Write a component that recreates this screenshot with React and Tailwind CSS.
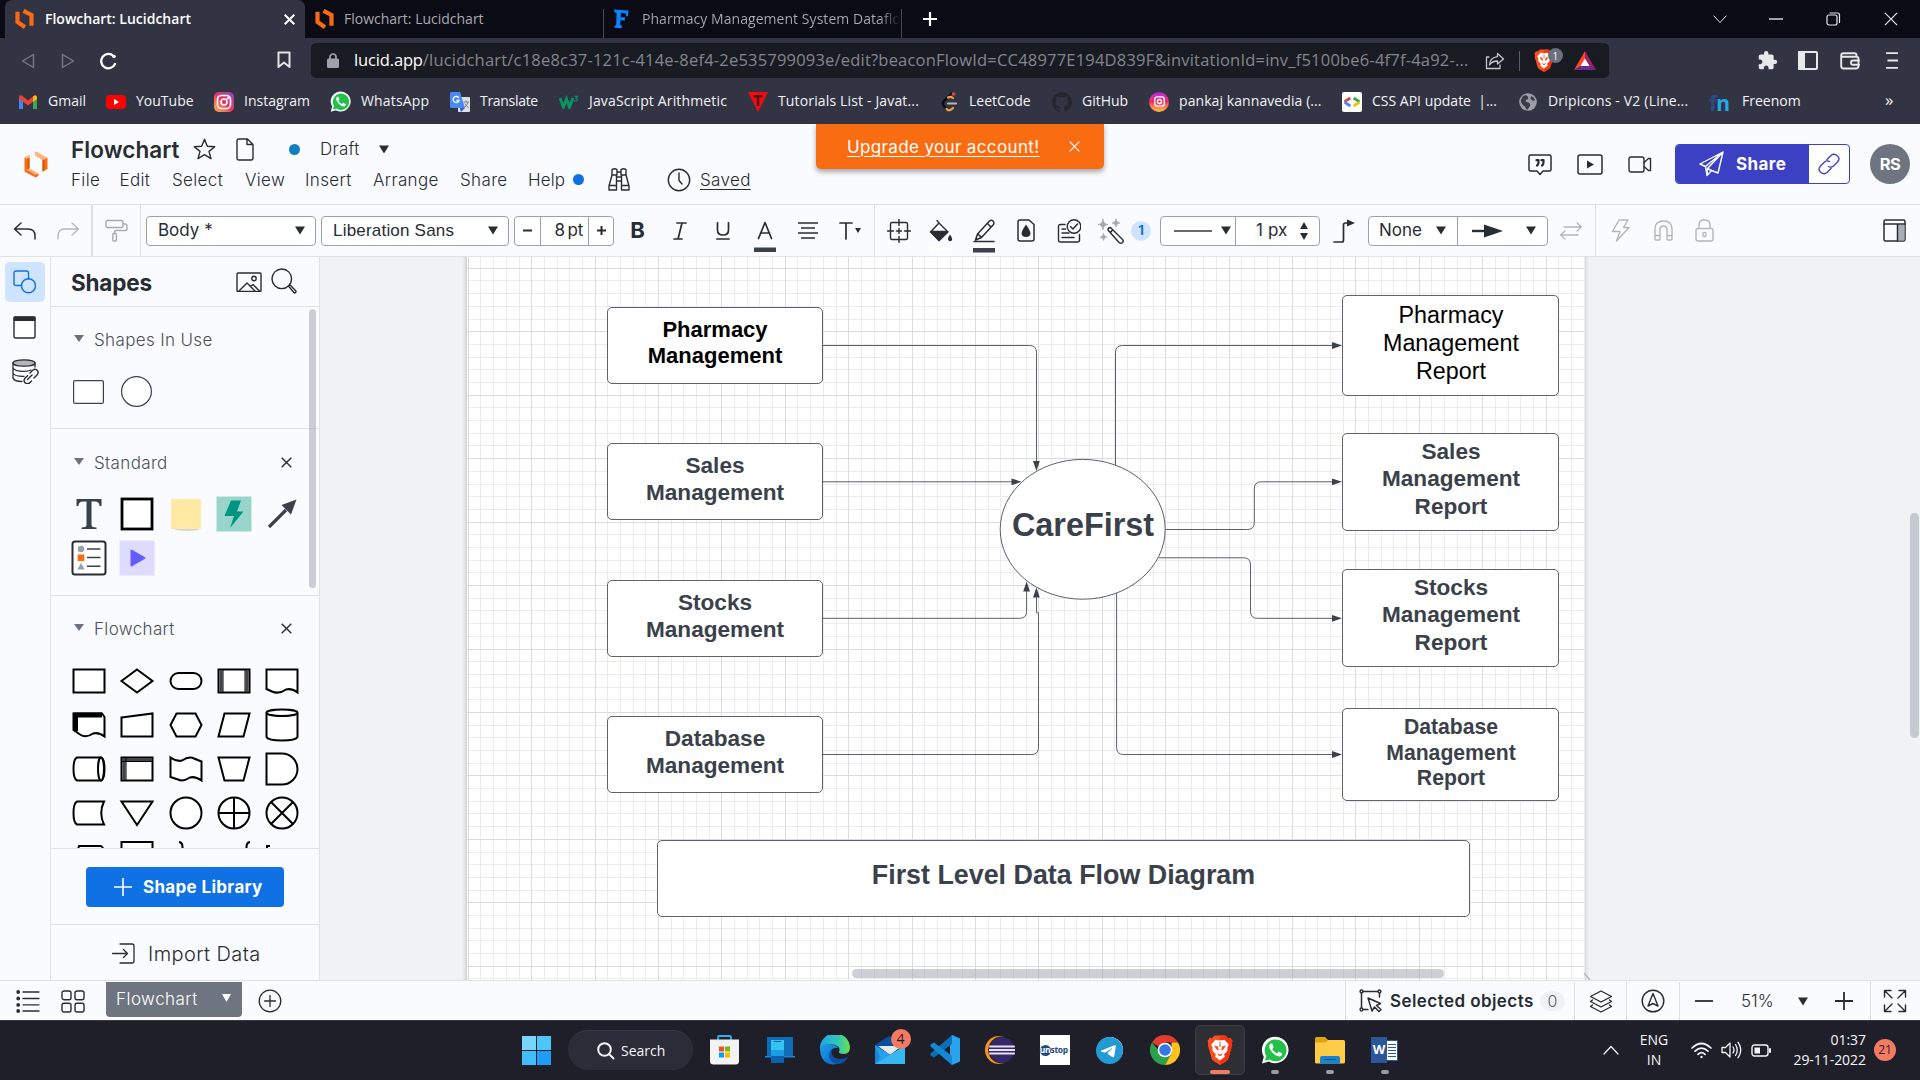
import React from "react";
import { SiTelegram, SiGithub } from "react-icons/si";
import { MdExtension } from "react-icons/md";

/* ---------- shared helpers ---------- */

function Ico({ w, h, children, className = "", sw = 1.4, fill = "none" }) {
  return (
    <svg
      width={w}
      height={h}
      viewBox={`0 0 ${w} ${h}`}
      fill={fill}
      stroke="currentColor"
      strokeWidth={sw}
      strokeLinecap="round"
      strokeLinejoin="round"
      className={`block shrink-0 ${className}`}
    >
      {children}
    </svg>
  );
}

function Cell({ className = "", children }) {
  return <div className={`flex shrink-0 items-center justify-center ${className}`}>{children}</div>;
}

function Caret({ className = "" }) {
  return (
    <svg width="10" height="9" viewBox="0 0 10 9" className={`block shrink-0 ${className}`}>
      <path d="M0 0.5H10L5 8.5Z" fill="currentColor" />
    </svg>
  );
}

function Cross({ size = 11, sw = 1.5 }) {
  return (
    <svg width={size} height={size} viewBox="0 0 11 11" stroke="currentColor" strokeWidth={sw} className="block shrink-0">
      <path d="M0.7 0.7L10.3 10.3M10.3 0.7L0.7 10.3" />
    </svg>
  );
}

function BraveShield({ w, h }) {
  return (
    <svg width={w} height={h} viewBox="0 0 26 30" className="block shrink-0">
      <path d="M7.500 0.500H18.500L21 3.200L23.300 2.800L25.500 6L24.700 8.500L25.200 10L21.500 23Q21 25 19 26.300L13 30L7 26.300Q5 25 4.500 23L0.800 10L1.300 8.500L0.500 6L2.700 2.800L5 3.200Z" fill="#fb4e1c" />
      <path d="M13 0.500H18.500L21 3.200L23.300 2.800L25.500 6L24.700 8.500L25.200 10L21.500 23Q21 25 19 26.300L13 30Z" fill="#f5340f" />
      <path d="M13 5.500L17.500 4.800L21.800 9.500L20.500 12.500L20.300 16L17 19.500L18 21.500L13 25.500L8 21.500L9 19.500L5.700 16L5.500 12.500L4.200 9.500L8.500 4.800Z" fill="#fff" />
      <path d="M7 10.500L11 11.500L11.800 15.500L9.500 14.500ZM19 10.500L15 11.500L14.200 15.500L16.500 14.500ZM10 18L13 19.500L16 18L13.800 21H12.200Z" fill="#fb4e1c" />
      <path d="M13 7V12" stroke="#fb4e1c" strokeWidth="1" />
    </svg>
  );
}

/* ---------- browser chrome ---------- */

function LucidMark() {
  return (
    <svg width="19" height="20" viewBox="0 0 19 20" fill="none" stroke="#f96b13" strokeWidth="4.2" className="block shrink-0">
      <path d="M2.500 2.800V13L10 18.200" />
      <path d="M8.500 1.800L16.500 6V16.800" />
    </svg>
  );
}

function TabStrip() {
  return (
    <div className="flex h-[38px] items-center bg-[#0b0b15] pl-[5px] text-[14px] text-[#a9aab0]">
      <div className="flex h-full w-[300px] items-center rounded-t-[7px] bg-[#323444] pl-[10px] pr-[10px] font-semibold text-white">
        <LucidMark />
        <span className="ml-[11px] flex-1 pb-[2px]">Flowchart: Lucidchart</span>
        <Cross sw={2} />
      </div>
      <div className="flex w-[298px] items-center pl-[10px]">
        <LucidMark />
        <span className="ml-[10px] pb-[2px]">Flowchart: Lucidchart</span>
      </div>
      <div className="mt-[9px] h-[29px] w-px bg-[#46474f]" />
      <div className="flex w-[297px] items-center pl-[9px]">
        <svg width="16" height="20" viewBox="0 0 16 20" className="block shrink-0" fill="#0a84ff">
          <path d="M1 0.500L15.500 1.500L15 7.500L13 6.500L12.500 4.200L8 4L7.700 8.400L12 8L11.800 11.600L7.400 11.300L7.200 15.600L9 17L8.600 19.200L1.400 18.800L1.700 17L3.200 15.800L3.600 4L1.400 3.200Z" />
        </svg>
        <span className="ml-[13px] whitespace-nowrap bg-gradient-to-r from-[#a9aab0] from-92% to-[#0b0b15] bg-clip-text pb-[2px] tracking-[0.050px] text-transparent">
          Pharmacy Management System Dataflo
        </span>
      </div>
      <div className="mt-[9px] h-[29px] w-px bg-[#46474f]" />
      <div className="flex flex-1 items-center pl-[20px] text-white">
        <Ico w={16} h={16} sw={2.2}><path d="M8 1V15M1 8H15" strokeLinecap="butt" /></Ico>
      </div>
      <div className="flex items-center text-[#e6e6e9]">
        <Cell className="w-[56px]"><Ico w={14} h={9} sw={1}><path d="M1 1L7 7.5L13 1" /></Ico></Cell>
        <Cell className="w-[57px]"><Ico w={14} h={2} className="mr-[2px]"><path d="M0 1H14" strokeLinecap="butt" /></Ico></Cell>
        <Cell className="w-[57px]">
          <Ico w={15} h={14} sw={1.2}><rect x="1" y="3" width="10" height="10" rx="2" /><path d="M4 1H11.5Q13.5 1 13.5 3V10.5" /></Ico>
        </Cell>
        <Cell className="w-[58px]"><Cross size={14} sw={0.95} /></Cell>
      </div>
    </div>
  );
}

function AddressBar() {
  return (
    <div className="flex h-[45px] items-center bg-[#323444]">
      <Cell className="w-[56px] text-[#777986]"><Ico w={14} h={16}><path d="M12.5 1.5V14.5L1.5 8Z" /></Ico></Cell>
      <Cell className="w-[24px] text-[#777986]"><Ico w={14} h={16}><path d="M1.5 1.5V14.5L12.5 8Z" /></Ico></Cell>
      <Cell className="w-[56px] text-white">
        <Ico w={18} h={18} sw={2.3}><path d="M16 12A7.2 7.2 0 1 1 14.5 4" /><circle cx="15" cy="4.5" r="1.8" fill="currentColor" stroke="none" /></Ico>
      </Cell>
      <Cell className="ml-[125px] w-[46px] pb-[2px] text-[#e3e3e6]"><Ico w={14} h={18} sw={2}><path d="M1.5 1.5H12.5V16L7 11.5L1.5 16Z" /></Ico></Cell>
      <div className="ml-[4px] flex h-[35px] w-[1298px] items-center rounded-[5px] bg-[#191b22] text-[16.5px] text-[#84868e]">
        <Cell className="w-[43px]">
          <svg width="12" height="15" viewBox="0 0 12 15" className="block"><rect y="5.5" width="12" height="9.5" rx="1.5" fill="#a0a2a9" /><path d="M3 6V4a3 3 0 0 1 6 0v2" stroke="#a0a2a9" strokeWidth="1.7" fill="none" /></svg>
        </Cell>
        <span className="tracking-[-0.15px] text-white">lucid.app</span>
        <span className="w-[1062px] whitespace-nowrap tracking-[0.2px]">
          /lucidchart/c18e8c37-121c-414e-8ef4-2e535799093e/edit?beaconFlowId=CC48977E194D839F&amp;invitationId=inv_f5100be6-4f7f-4a92-...
        </span>
        <Ico w={20} h={18} className="text-[#c4c5ca]" sw={1.3}><path d="M4 5H1.5V16.5H15V13M12.5 1.5L18.5 7L12.5 12V9Q7 9 4.5 13Q5 5.500 12.5 4.700Z" /></Ico>
        <div className="ml-[14px] h-[20px] w-px bg-[#5c5e66]" />
        <div className="relative ml-[14px] flex h-[23px] w-[20px] items-center justify-center">
          <BraveShield w={20} h={23} />
          <div className="absolute left-[14px] top-[-1px] flex h-[15px] w-[15px] items-center justify-center rounded-full bg-[#6c6f7e] text-[10px] leading-none text-white">1</div>
        </div>
        <svg width="22" height="19" viewBox="0 0 22 19" className="ml-[20px] block">
          <path d="M11 0L0 19L11 13Z" fill="#ff4724" /><path d="M11 0L22 19L11 13Z" fill="#9e1f63" /><path d="M0 19H22L11 12Z" fill="#662d91" /><path d="M11 7.500L6.500 15H15.500Z" fill="#fff" />
        </svg>
      </div>
      <div className="ml-[138px] flex items-center text-[#e8e8ea]">
        <Cell className="w-[40px]"><MdExtension className="size-[21px]" /></Cell>
        <Cell className="w-[41px]">
          <Ico w={20} h={19} sw={2}><rect x="1" y="1" width="18" height="17" rx="1" /><path d="M1 1H6V18H1Z" fill="currentColor" /></Ico>
        </Cell>
        <Cell className="w-[44px]">
          <Ico w={20} h={18} sw={1.9}><path d="M16.500 4V3Q16.500 1.300 14.500 1.300H3.500Q1.200 1.300 1.200 3.500V14Q1.200 16.500 3.500 16.500H16Q18.500 16.500 18.500 14V7Q18.500 4.700 16 4.700H2" /><path d="M19 8.500H13Q11 8.500 11 10.700T13 12.800H19" /></Ico>
        </Cell>
        <Cell className="w-[40px]"><Ico w={12} h={17} sw={1.8}><path d="M0 1.200H12M1.500 8.500H12M0 15.800H12" strokeLinecap="butt" /></Ico></Cell>
      </div>
    </div>
  );
}

function InstaIcon() {
  return (
    <div className="flex size-[20px] shrink-0 items-center justify-center rounded-[5px] bg-gradient-to-tr from-[#fdb53c] via-[#e8335f] to-[#8a3ac8]">
      <Ico w={16} h={16} sw={1.6} className="text-white"><rect x="1.500" y="1.500" width="13" height="13" rx="4" /><circle cx="8" cy="8" r="3" /><circle cx="12" cy="4.200" r="0.400" /></Ico>
    </div>
  );
}

function InstaRoundIcon() {
  return (
    <div className="flex size-[20px] shrink-0 items-center justify-center rounded-full bg-gradient-to-t from-[#fdc02c] via-[#f4245f] to-[#b01be0]">
      <Ico w={11} h={11} sw={1.3} className="text-white"><rect x="0.800" y="0.800" width="9.400" height="9.400" rx="2.500" /><circle cx="5.500" cy="5.500" r="2" /></Ico>
    </div>
  );
}

function WhatsAppIcon({ size = 21 }) {
  return (
    <svg width={size} height={size} viewBox="0 0 28 28" className="block shrink-0">
      <path d="M1 27.500L2.800 20.800A13.300 13.300 0 1 1 7.800 25.600Z" fill="#fff" />
      <path d="M3.800 24.800L5.300 20A10.900 10.900 0 1 1 8.700 23.500Z" fill="#22c14a" />
      <path d="M9.800 7.500C8 8.500 7.500 11 9.500 14C12 18 15 20 18.200 20.500C20 20.500 21.200 19 21.100 17.500L17.600 15.600L16 17.400C13.800 16.500 12.300 15 11.300 13L12.600 11.300L11.200 7.600Z" fill="#fff" />
    </svg>
  );
}

function Bookmark({ icon, children, className, gap = "ml-[10px]" }) {
  return (
    <div className={`flex shrink-0 items-center whitespace-nowrap ${className}`}>
      <div className="flex w-[20px] shrink-0 items-center justify-center">{icon}</div>
      <span className={`pb-[3px] ${gap}`}>{children}</span>
    </div>
  );
}

function BookmarksBar() {
  return (
    <div className="flex h-[41px] items-center bg-[#323444] pb-[4px] pl-[18px] text-[14px] text-[#f2f2f4]">
      <Bookmark className="w-[88px]" icon={
        <svg width="18" height="14" viewBox="0 0 18 14" className="block"><path d="M0 2V14H4V6Z" fill="#4285f4" /><path d="M18 2V14H14V6Z" fill="#34a853" /><path d="M0 2Q0 0 2.500 0.300L9 5.500L15.500 0.300Q18 0 18 2L17.800 4L9 10.500L0.200 4Z" fill="#ea4335" /><path d="M14 2V6.800L18 4V2Q17 -0.500 14 1.500Z" fill="#fbbc04" /></svg>
      }>Gmail</Bookmark>
      <Bookmark className="w-[108px]" icon={<svg width="20" height="14" viewBox="0 0 20 14" className="block"><rect width="20" height="14" rx="3.500" fill="#f00" /><path d="M8 4V10L13.200 7Z" fill="#fff" /></svg>}>YouTube</Bookmark>
      <Bookmark className="w-[116px]" icon={<InstaIcon />}>Instagram</Bookmark>
      <Bookmark className="w-[120px]" gap="ml-[11px]" icon={<WhatsAppIcon />}><span className="tracking-[0.150px]">WhatsApp</span></Bookmark>
      <Bookmark className="w-[109px] tracking-[-0.3px]" icon={
        <svg width="20" height="20" viewBox="0 0 20 20" className="block"><rect x="8" y="5" width="12" height="15" rx="1" fill="#dde1e4" /><path d="M0 1.500Q0 0 1.500 0H10L15 16H1.500Q0 16 0 14.500Z" fill="#4a8af4" /><path d="M15 16L11 20L9.800 16Z" fill="#2f5fc4" /><path d="M8.800 6A3 3 0 1 0 9 8.500H6.500" stroke="#fff" strokeWidth="1.300" fill="none" /><path d="M13.500 10H19M16 8.500V10M14.500 15.500Q17.500 13 18 10M15 11.500Q16 14 18.500 15.500" stroke="#7a858b" strokeWidth="1" fill="none" /></svg>
      }>Translate</Bookmark>
      <Bookmark className="w-[189px]" icon={
        <svg width="20" height="14" viewBox="0 0 20 14" className="block" fill="none" stroke="#059862"><path d="M1 3L4.500 12L7.500 4L10.500 12L14 3" strokeWidth="2.800" /><path d="M15.500 1.200H18.500L17 3.200Q19.300 4 18 5.600Q16.500 6.600 15.300 5.300" strokeWidth="1.100" /></svg>
      }><span className="tracking-[0.15px]">JavaScript Arithmetic</span></Bookmark>
      <Bookmark className="w-[191px]" icon={
        <svg width="20" height="20" viewBox="0 0 20 20" className="block"><path d="M0 0H20L10 20Z" fill="#f00d0d" /><path d="M5.500 3H14.500V5.500H11.300V14H8.700V5.500H5.500Z" fill="#5c1018" /></svg>
      }><span className="tracking-[0.15px]">Tutorials List - Javat...</span></Bookmark>
      <Bookmark className="w-[113px]" icon={
        <svg width="17" height="20" viewBox="0 0 17 20" className="block" fill="none" strokeLinecap="round" strokeWidth="2.200"><path d="M10.500 1.500L2.500 9.500Q1 11.500 2.500 13.500L5.500 17" stroke="#0b0b0d" /><path d="M12 6Q9.500 4 7 5.500" stroke="#f0a23a" /><path d="M5.500 17Q8.500 20 12 16" stroke="#f0a23a" /><path d="M7 11.500H15" stroke="#b8b8b8" /><circle cx="12.500" cy="2" r="1.400" fill="#d24a43" stroke="#d24a43" strokeWidth="1" /></svg>
      }>LeetCode</Bookmark>
      <Bookmark className="w-[97px]" icon={<SiGithub className="size-[20px] text-[#24262e]" />}>GitHub</Bookmark>
      <Bookmark className="w-[193px]" icon={<InstaRoundIcon />}><span className="tracking-[0.080px]">pankaj kannavedia (...</span></Bookmark>
      <Bookmark className="w-[176px]" icon={
        <svg width="20" height="20" viewBox="0 0 20 20" className="block" fill="none" strokeWidth="2.800"><rect width="20" height="20" rx="2" fill="#fff" /><path d="M8.300 6L2.500 9.600" stroke="#ea4335" /><path d="M2.500 10.200L8.300 14" stroke="#4285f4" /><path d="M11.700 6L17.500 9.800" stroke="#34a853" /><path d="M17.500 10.200L11.700 14" stroke="#fbbc04" /></svg>
      }><span className="whitespace-pre">CSS API update  |...</span></Bookmark>
      <Bookmark className="w-[191px]" icon={
        <svg width="18" height="18" viewBox="0 0 18 18" className="block"><circle cx="9" cy="9" r="8.800" fill="#9b9ea6" /><path d="M4 3Q8 1 9 4Q10 6 7 7Q6 9 8 9Q12 10 11 13Q9 16 8 17Q6 13 4 12Q1.500 10 2 7Z" fill="#3a3c49" /><path d="M12 3Q15 4 16 7L14 8L11.500 6Z" fill="#3a3c49" /></svg>
      }><span className="tracking-[0.18px]">Dripicons - V2 (Line...</span></Bookmark>
      <Bookmark className="w-[176px]" gap="ml-[13px]" icon={<span className="pt-[2px] text-[21px] font-bold leading-[18px] tracking-[-1px] text-[#22a7f0]"><span className="text-[#2c4a80]">f</span>n</span>}>Freenom</Bookmark>
      <span className="pb-[4px] text-[17px]">»</span>
    </div>
  );
}

/* ---------- application header ---------- */

function AppHeader() {
  return (
    <div className="relative flex h-[81px] items-start border-b border-[#dfe2e7] bg-[#fafbfe] text-[#282c33]">
      <Cell className="mt-[26px] w-[71px] pt-[1px]">
        <svg width="24" height="27" viewBox="0 0 24 27" fill="none" className="block">
          <path d="M0.500 6.500L5.500 4V17.500L0.500 20.500Z" fill="#f96b13" />
          <path d="M0.500 6.500L5.500 4L5.500 6.500L2.500 8Z" fill="#fdb97f" />
          <path d="M3.500 8L5.500 7V17.500L3.500 18.500Z" fill="#d9560b" />
          <path d="M0.500 20.500L5.500 17.500L14 22L11.500 26.500Z" fill="#fdb07a" />
          <path d="M0.500 20.500L12 26.500L14.500 24.500V22.500L11.500 24L3 19Z" fill="#f96b13" />
          <path d="M11.500 0.500V4.500L18.500 9V20.500L23.500 18V7Z" fill="#f96b13" />
          <path d="M11.500 0.500L23.500 7L19.500 9L10.500 4Z" fill="#fdb97f" />
          <path d="M18.500 9.500L20.500 8.500V19.500L18.500 20.500Z" fill="#d9560b" />
        </svg>
      </Cell>
      <div className="flex flex-col pt-[8px]">
        <div className="flex h-[34px] items-center">
          <h1 className="w-[122px] pt-[3px] text-[22.500px] font-semibold leading-none tracking-[0.050px]">Flowchart</h1>
          <Ico w={23} h={22} sw={1.400} className="mb-px"><path d="M11.500 1.200L14.300 8.300L21.800 8.700L16 13.400L18 20.700L11.500 16.600L5 20.700L7 13.400L1.200 8.700L8.700 8.300Z" /></Ico>
          <Ico w={18} h={23} sw={1.400} className="ml-[20px]"><path d="M3 1H11.500L17 6.500V20Q17 22 15 22H3Q1 22 1 20V3Q1 1 3 1ZM11 1V6.500H17" /></Ico>
          <div className="ml-[35px] size-[11px] rounded-full bg-[#0e7fc1]" />
          <span className="ml-[20px] w-[59px] pt-[2px] text-[17px] font-light tracking-[0.300px]">Draft</span>
          <Caret />
        </div>
        <div className="flex h-[27px] items-center text-[17px] font-light tracking-[0.35px]">
          <span className="w-[48.500px] pt-[2px]">File</span>
          <span className="w-[52.500px] pt-[2px]">Edit</span>
          <span className="w-[73px] pt-[2px]">Select</span>
          <span className="w-[60px] pt-[2px]">View</span>
          <span className="w-[68px] pt-[2px]">Insert</span>
          <span className="w-[87px] pt-[2px]">Arrange</span>
          <span className="w-[68px] pt-[2px]">Share</span>
          <span className="w-[45px] pt-[2px] tracking-[0.100px]">Help</span>
          <div className="size-[11px] rounded-full bg-[#1071e5]" />
          <Ico w={22} h={23} sw={1.400} className="ml-[24px]"><path d="M4 1.500Q6.500 0 9 1.500V7H4ZM13 1.500Q15.500 0 18 1.500V7H13ZM4 7L1 18V22H8.500V7M18 7L21 18V22H13.500V7M8.500 9H13.500M8.500 13H13.500M1.300 17.500H8.500M13.500 17.500H20.700M9 4H13" /></Ico>
          <Ico w={24} h={24} sw={1.400} className="ml-[37px]"><circle cx="12" cy="12" r="10.700" /><path d="M12 5V12.500L15 16" /></Ico>
          <span className="ml-[9px] pt-[2px] underline decoration-1 underline-offset-[3px]">Saved</span>
        </div>
      </div>
      <div className="absolute left-[816px] top-0 flex h-[45px] w-[288px] items-center rounded-b-[5px] bg-[#fa6c12] pl-[31px] text-[17px] text-white shadow-[0_3px_5px_rgba(60,60,70,0.45)]">
        <span className="w-[222px] pt-[2px] tracking-[0.360px] underline decoration-1 underline-offset-[3px]">Upgrade your account!</span>
        <Cross size={11} sw={1.200} />
      </div>
      <div className="ml-auto mt-[20px] flex items-center">
        <Cell className="w-[50px] pt-[2px]">
          <Ico w={24} h={22} sw={1.500}><path d="M2.500 1H21.500Q23 1 23 2.500V15.500Q23 17 21.500 17H15L12 20.500L9 17H2.500Q1 17 1 15.500V2.500Q1 1 2.500 1Z" /><path d="M8.500 6.200H10.500V8.500Q10.500 10.500 9 11.500M13.500 6.200H15.500V8.500Q15.500 10.500 14 11.500" strokeWidth="2.200" /></Ico>
        </Cell>
        <Cell className="w-[50px]"><Ico w={26} h={21} sw={1.500}><rect x="1" y="1" width="24" height="19" rx="2" /><path d="M10 6.500V14.500L17 10.500Z" fill="currentColor" stroke="none" /></Ico></Cell>
        <Cell className="w-[50px]"><Ico w={24} h={17} sw={1.400}><rect x="1" y="1" width="15" height="15" rx="2" /><path d="M16 6.500L20.500 2.500H22.500V14.500H20.500L16 10.500" /></Ico></Cell>
        <div className="ml-[10px] flex h-[40px] w-[175px] overflow-hidden rounded-[4px] border border-[#3c41c3] bg-white">
          <div className="flex w-[133px] items-center bg-[#3c41c3] pl-[23px] text-[17px] font-bold tracking-[0.400px] text-white">
            <Ico w={25} h={26} sw={1.400} className="mr-[12px]"><path d="M24 1L1 13L6.500 15.500L8 24.500L12.500 19.500L19 22L24 1L8.500 17.500M24 1L6.500 15.500M8 24.500L8.500 17.500L12.500 19.500" /></Ico>
            <span className="pt-[2px]">Share</span>
          </div>
          <div className="flex flex-1 items-center justify-center text-[#3c41c3]">
            <Ico w={22} h={22} sw={1.400}><path d="M9 6.500L13 2.500Q16 0 19.300 2.700T19.500 9L15.500 13Q13 15 10.500 13.500M13 15.500L9 19.500Q6 22 2.700 19.300T2.500 13L6.500 9Q9 7 11.500 8.500" /></Ico>
          </div>
        </div>
        <div className="ml-[20px] mr-[10px] flex size-[40px] items-center justify-center rounded-full bg-[#6e7480] pt-px text-[16.500px] font-bold tracking-[-0.600px] text-white">RS</div>
      </div>
    </div>
  );
}

/* ---------- formatting toolbar ---------- */

function Divider({ className = "h-full" }) {
  return <div className={`w-px shrink-0 bg-[#dcdfe5] ${className}`} />;
}

const fieldBox = "flex h-[30px] shrink-0 items-center rounded-[4px] border border-[#9ba1ad] bg-white";

function Toolbar() {
  return (
    <div className="flex h-[52px] items-center border-b border-[#dfe2e7] bg-[#fafbfe] text-[17px] font-light text-[#282c33]">
      <Cell className="w-[49px]"><Ico w={23} h={18} sw={1.500}><path d="M22 17V14Q22 7 15 7H1.500M8 1L1.500 7L8 13" /></Ico></Cell>
      <Cell className="mr-[4px] w-[38px] text-[#b3b7bd]"><Ico w={23} h={18} sw={1.300}><path d="M1 17V14Q1 7 8 7H21.500M15 1L21.500 7L15 13" /></Ico></Cell>
      <div className="h-full w-[2px] shrink-0 bg-[#dcdfe5]" />
      <Cell className="mr-[1px] w-[46px] text-[#a6aab1]"><Ico w={23} h={23} sw={1.400}><rect x="1" y="1.500" width="17" height="7" rx="1.500" /><path d="M18 5H20Q22 5 22 7V10Q22 11.500 20 11.500H11Q9.500 11.500 9.500 13V14.500" /><rect x="7.800" y="14.500" width="3.600" height="7.500" rx="1" /></Ico></Cell>
      <Divider />
      <div className={`${fieldBox} ml-[5px] w-[170px] justify-between pl-[11px] pr-[10px] font-normal`}><span className="pt-px">Body *</span><Caret /></div>
      <div className={`${fieldBox} ml-[5px] w-[188px] justify-between pl-[11px] pr-[10px]`}><span className="pt-px font-['Liberation_Sans',Arial,sans-serif] font-normal tracking-[0.200px]">Liberation Sans</span><Caret /></div>
      <div className={`${fieldBox} ml-[5px] w-[100px]`}>
        <Cell className="w-[25px]"><Ico w={9} h={9} sw={2}><path d="M0 4.500H9" strokeLinecap="butt" /></Ico></Cell>
        <div className="flex h-full flex-1 items-center justify-end border-x border-[#9ba1ad] pr-[5px] font-normal tracking-[-0.300px]">8&thinsp;pt</div>
        <Cell className="w-[24px]"><Ico w={9} h={9} sw={2}><path d="M0 4.500H9M4.500 0V9" strokeLinecap="butt" /></Ico></Cell>
      </div>
      <Cell className="w-[47px] text-[22px] font-bold">B</Cell>
      <Cell className="w-[38px]"><Ico w={14} h={18} sw={1.700}><path d="M4 1H13M1 17H9M9 1L5 17" /></Ico></Cell>
      <Cell className="w-[48px]"><Ico w={14} h={18} sw={1.700}><path d="M1.500 0.800V8Q1.500 13 7 13T12.500 8V0.800M1 17H13" /></Ico></Cell>
      <Cell className="w-[36px]"><Ico w={22} h={31} sw={1.700} className="mt-[12px]"><path d="M4.500 17.500L11 1.500L17.500 17.500M6.500 12H15.500" /><rect y="26.500" width="22" height="4.500" fill="#3a414a" stroke="none" /></Ico></Cell>
      <Cell className="w-[49px]"><Ico w={20} h={17} sw={1.300}><path d="M0 1H20M3 6H17M0 11H20M3 16H17" strokeLinecap="butt" /></Ico></Cell>
      <Cell className="mr-[6px] w-[36px]"><Ico w={22} h={18} sw={1.700}><path d="M1 1H13M7 1V17" /><path d="M16 6H22L19 11Z" fill="currentColor" stroke="none" /></Ico></Cell>
      <Divider />
      <Cell className="w-[48px]"><Ico w={24} h={24} sw={1.400}><rect x="3.500" y="3.500" width="17" height="17" rx="1.500" /><path d="M12 0.500V6.500M12 9.500V14.500M12 17.500V23.500M0.500 12H6.500M9.500 12H14.500M17.500 12H23.500" /></Ico></Cell>
      <Cell className="w-[36px]"><Ico w={24} h={31} sw={1.400} className="mt-[10px]"><path d="M10 3L19 12L10 20.500L1.500 12ZM10 3L8 0.500" /><path d="M2 11.500H18.500L10 20.500Z" fill="currentColor" /><path d="M21 14.500Q18 19 19.500 20.500Q21 22 22.800 20.500Q24 19 21 14.500Z" fill="currentColor" stroke="none" /><rect y="26.500" width="23" height="4.500" fill="#fff" stroke="none" /></Ico></Cell>
      <Cell className="w-[50px]"><Ico w={22} h={34} sw={1.500} className="mt-[11px]"><path d="M1 22.500H21M2.500 21L4.500 15L16.500 2Q18.500 0.500 20 2T20.500 5.500L8.500 18.500L2.500 21ZM14.500 4.500L18 8M5 15L8.500 18.500" /><rect y="29" width="22" height="4.500" fill="#3a414a" stroke="none" /></Ico></Cell>
      <Cell className="w-[34px]"><Ico w={18} h={23} sw={1.500}><path d="M3 1H12L17 5.500V20Q17 22 15 22H3Q1 22 1 20V3Q1 1 3 1Z" /><path d="M9 5.500Q4.500 12 4.500 14.500Q5 18 9 18T13.500 14.500Q13.500 12 9 5.500Z" fill="currentColor" stroke="none" /></Ico></Cell>
      <Cell className="w-[52px]"><Ico w={24} h={24} sw={1.400}><path d="M8 5.500H3.500Q1.500 5.500 1.500 7.500V21Q1.500 23 3.500 23H20.500Q22.500 23 22.500 21V15.500M5 10H8.500M5 14H12M5 18.500H17" /><circle cx="17" cy="7.500" r="6.800" /><path d="M13.500 7.500L16 10L20.500 5" /></Ico></Cell>
      <Cell className="w-[32px]"><Ico w={28} h={26} sw={1.400}><path d="M13.500 9.500Q11 9.500 11 12L22 24.500Q24 26 25.500 24.500T25.500 21.500L13.500 9.500ZM15.500 12L13.500 14.500" /><path d="M6 1Q6.500 6 11 6.500Q6.500 7 6 12Q5.500 7 1 6.500Q5.500 6 6 1ZM19 1Q19.500 4.500 23 5Q19.500 5.500 19 9Q18.500 5.500 15 5Q18.500 4.500 19 1ZM6.500 15.500Q7 18.500 10 19Q7 19.500 6.500 22.500Q6 19.500 3 19Q6 18.500 6.500 15.500Z" fill="#a3a8b0" stroke="#a3a8b0" strokeWidth="0.600" /></Ico></Cell>
      <div className="ml-[4px] flex size-[20px] shrink-0 items-center justify-center rounded-full bg-[#cfe4ff] text-[13px] font-bold text-[#1071e5]">1</div>
      <div className={`${fieldBox} ml-[9px] w-[160px]`}>
        <div className="flex h-full w-[75px] items-center border-r border-[#9ba1ad] pl-[13px]">
          <div className="mr-[9px] h-[2px] w-[38px] bg-[#6a6a6a]" /><Caret />
        </div>
        <span className="w-[56px] pl-[20px] pt-px font-normal tracking-[0.100px]">1 px</span>
        <svg width="8" height="18" viewBox="0 0 8 18" className="ml-[8px] block"><path d="M4 0L8 7H0ZM4 18L8 11H0Z" fill="currentColor" /></svg>
      </div>
      <Cell className="w-[48px]"><Ico w={22} h={24} sw={1.700}><path d="M1 23H9Q10.500 23 10.500 21V6Q10.500 4 12.500 4H17" /><path d="M14 0.500L22 4L14 7.500Z" fill="currentColor" stroke="none" /></Ico></Cell>
      <div className={`${fieldBox} w-[180px]`}>
        <div className="flex h-full w-[89px] items-center border-r border-[#9ba1ad] pl-[10px] font-normal"><span className="w-[57px] pt-px">None</span><Caret /></div>
        <svg width="31" height="16" viewBox="0 0 31 16" className="ml-[14px] block"><path d="M0 8H16" stroke="currentColor" strokeWidth="2.400" /><path d="M12 1.500L31 8L12 14.500Z" fill="currentColor" /></svg>
        <Caret className="ml-[23px]" />
      </div>
      <Cell className="mr-px w-[46px] text-[#b3b7bd]"><Ico w={24} h={18} sw={1.300}><path d="M5 5H22M18 1L22.500 5L18 9M19 13H2M6 9L1.500 13L6 17" /></Ico></Cell>
      <Divider />
      <Cell className="w-[48px] text-[#b3b7bd]"><Ico w={19} h={23} sw={1.400}><path d="M8 1H17L12.500 8.500H18L5.500 22L9 12.500H1.500Z" /></Ico></Cell>
      <Cell className="w-[38px] text-[#b3b7bd]"><Ico w={19} h={21} sw={1.400}><path d="M1 19V9Q1 1 9.500 1T18 9V19Q18 20 17 20H14Q13 20 13 19V9.500Q13 6 9.500 6T6 9.500V19Q6 20 5 20H2Q1 20 1 19ZM1 15.500H6M13 15.500H18" /></Ico></Cell>
      <Cell className="w-[45px] text-[#b3b7bd]"><Ico w={19} h={23} sw={1.400}><rect x="1" y="9.500" width="17" height="12.500" rx="2" /><path d="M4 9.500V6Q4 1 9.500 1T15 6V9.500" /><rect x="8" y="13.500" width="3" height="4" rx="1.200" /></Ico></Cell>
      <div className="ml-auto mr-[14px]"><Ico w={23} h={23} sw={1.500}><rect x="1" y="1" width="21" height="21" rx="1.500" /><rect x="15" y="5.500" width="6.500" height="16" fill="#a9adb4" stroke="none" /><path d="M1 5H22M14.500 5V22" /></Ico></div>
    </div>
  );
}

/* ---------- left rail and shapes panel ---------- */

function Rail() {
  return (
    <div className="flex w-[51px] shrink-0 flex-col border-r border-[#dfe2e7] pl-[5px] pt-[5px] text-[#282c33]">
      <Cell className="size-[40px] rounded-[5px] bg-[#cfe4ff] text-[#1071e5]">
        <Ico w={24} h={24} sw={1.400}><path d="M8.500 15.500H3Q1 15.500 1 13.500V3Q1 1 3 1H13.500Q15.500 1 15.500 3V9" /><circle cx="15.500" cy="15.800" r="7" /></Ico>
      </Cell>
      <Cell className="h-[50px] w-[39px]">
        <Ico w={23} h={23} sw={1.400}><rect x="1" y="1" width="21" height="21" rx="1.500" fill="#fff" /><rect x="0.500" y="0.500" width="22" height="4.500" rx="1" fill="currentColor" stroke="none" /></Ico>
      </Cell>
      <Cell className="h-[38px] w-[40px]">
        <Ico w={27} h={25} sw={1.300}><ellipse cx="12" cy="4" rx="11" ry="3.200" fill="#b1b5bc" /><path d="M1 4V19Q2 22.500 10 22.500M23 4V8M1 9Q3 12.500 12 12.300Q17 12.300 19 11M1 14.500Q3 17.500 12 17.300" /><path d="M18 14L21 11Q23.500 9.300 25.300 11.500T25 16L22 19M20 16L15.500 20.500M19.500 22L17.500 24Q14.500 25.500 12.800 23.500T13.200 19L15.500 16.700" strokeWidth="1.400" /></Ico>
      </Cell>
    </div>
  );
}

function SectionTitle({ children, closable }) {
  return (
    <div className="flex h-[20px] items-center text-[17px] font-light text-[#4a5059]">
      <svg width="10" height="7" viewBox="0 0 10 7" className="mb-[3px] block"><path d="M0 0H10L5 7Z" fill="#6a7180" /></svg>
      <span className="ml-[10px] flex-1 pt-[2px] tracking-[0.350px]">{children}</span>
      {closable && <span className="mb-px mr-[27px] text-[#282c33]"><Cross size={11} sw={1.400} /></span>}
    </div>
  );
}

function Thumb({ children }) {
  return (
    <svg width="48" height="44" viewBox="-24 -22 48 44" fill="#fff" stroke="#000" strokeWidth="2" className="block">
      {children}
    </svg>
  );
}

function FlowchartShapes() {
  return (
    <div className="grid grid-cols-[48px_49px_48px_48px_48px]">
      <Thumb><rect x="-15.500" y="-11.500" width="31" height="23" /></Thumb>
      <Thumb><path d="M0 -11.500L15.500 0L0 11.500L-15.500 0Z" /></Thumb>
      <Thumb><rect x="-15.500" y="-8" width="31" height="16" rx="8" /></Thumb>
      <Thumb><rect x="-15.500" y="-11.500" width="31" height="23" /><path d="M-13 -11V11M13 -11V11" stroke="#444" strokeWidth="3" /><path d="M-11 -11V11M11 -11V11" strokeWidth="1" /></Thumb>
      <Thumb><path d="M-15.500 -11.500H15.500V11.500Q10 7 4 8.500Q-3 13.500 -10 10.500L-15.500 8Z" /></Thumb>

      <Thumb><path d="M-15.500 -11.500H13L15.500 -8V11.500Q10 7 4 8.500Q-3 13.500 -9 9.500L-15.500 5Z" /><path d="M-15.500 -10H13M-13.500 -10V6" strokeWidth="5" /></Thumb>
      <Thumb><path d="M-15.500 -7.500L15.500 -11.500V11.500H-15.500Z" /></Thumb>
      <Thumb><path d="M-9.500 -11.500H9.500L15.500 0L9.500 11.500H-9.500L-15.500 0Z" /></Thumb>
      <Thumb><path d="M-9.500 -11.500H15.500L9.500 11.500H-15.500Z" /></Thumb>
      <Thumb><path d="M-15.500 -12V12Q-14 15.500 0 15.500T15.500 12V-12" /><ellipse cy="-12.300" rx="15.500" ry="3.200" /></Thumb>

      <Thumb><path d="M-12 -11.500H12Q15.500 -10 15.500 0T12 11.500H-12Q-15.500 10 -15.500 0T-12 -11.500Z" /><ellipse cx="12" rx="3" ry="11.500" /></Thumb>
      <Thumb><rect x="-15.500" y="-11.500" width="31" height="23" /><path d="M-13 -11V11M-15 -9.500H15" stroke="#444" strokeWidth="3" /><path d="M-11 -11V11M-15 -7.500H15" strokeWidth="1" /></Thumb>
      <Thumb><path d="M-15.500 -11.500Q-9 -7 -4 -8.500Q3 -13 8 -10.500L15.500 -7.500V11.500Q9 7 4 8.500Q-3 13 -8 10.500L-15.500 8Z" /></Thumb>
      <Thumb><path d="M-15.500 -11.500H15.500L9.500 11.500H-9.500Z" /></Thumb>
      <Thumb><path d="M-15.500 -15.500H0A15.500 15.500 0 0 1 0 15.500H-15.500Z" /></Thumb>

      <Thumb><path d="M-12 -11.500H15Q9.500 0 15 11.500H-12Q-15.500 10 -15.500 0T-12 -11.500Z" /></Thumb>
      <Thumb><path d="M-15.500 -11.500H15.500L0 12Z" /></Thumb>
      <Thumb><circle r="15.500" /></Thumb>
      <Thumb><circle r="15.500" /><path d="M0 -15V15M-15 0H15" /></Thumb>
      <Thumb><circle r="15.500" /><path d="M-11 -11L11 11M-11 11L11 -11" /></Thumb>

      <Thumb><path d="M-10 -11H12Q15.500 -9 15.500 0L-13 0Z" /></Thumb>
      <Thumb><path d="M-15.500 -15H15.500V10H-15.500Z" /></Thumb>
      <Thumb><path d="M-7 -15Q-3.500 -14.500 -3.500 -10V-5" fill="none" /></Thumb>
      <Thumb><path d="M16 -15Q12.500 -14.500 12.500 -10V-5" fill="none" /></Thumb>
      <Thumb><path d="M-16 -11H-12M-15 -11V0" fill="none" /></Thumb>
    </div>
  );
}

function ShapesPanel() {
  return (
    <div className="relative flex w-[269px] shrink-0 flex-col border-r border-[#dfe2e7]">
      <div className="flex h-[50px] shrink-0 items-center border-b border-[#dfe2e7] pl-[20px] text-[#282c33]">
        <h2 className="w-[165px] pt-[2px] text-[22.500px] font-bold tracking-[-0.200px]">Shapes</h2>
        <Ico w={26} h={20} sw={1.400}><rect x="1" y="1" width="24" height="18.500" rx="1" /><circle cx="18" cy="6.500" r="2.200" /><path d="M3 19L11 11L19 19M14.500 14.500L17 12.500L23.500 19" /></Ico>
        <Ico w={26} h={26} sw={1.400} className="mb-px ml-[9px]"><circle cx="10.800" cy="10.800" r="9.800" /><path d="M17.500 18L18.800 16.700L25 23Q25 25 23.300 25Z" /></Ico>
      </div>
      <div className="flex h-[122px] shrink-0 flex-col border-b border-[#dfe2e7] pl-[23px] pt-[23px]">
        <SectionTitle>Shapes In Use</SectionTitle>
        <div className="ml-[-1px] mt-[26px] flex items-center">
          <Ico w={31} h={24} sw={1.200} className="text-[#3a414a]"><rect x="0.600" y="0.600" width="29.800" height="22.800" rx="1.500" fill="#fff" /></Ico>
          <Ico w={31} h={31} sw={1.200} className="ml-[17px] text-[#3a414a]"><circle cx="15.500" cy="15.500" r="14.900" fill="#fff" /></Ico>
        </div>
      </div>
      <div className="flex h-[167px] shrink-0 flex-col border-b border-[#dfe2e7] pl-[23px] pt-[24px]">
        <SectionTitle closable>Standard</SectionTitle>
        <div className="ml-[-9px] mt-[19px] grid grid-cols-[48px_49px_48px_48px_48px]">
          <Thumb><path d="M-12.500 -15H12.500V-8H10.500Q10.500 -12.500 6 -12.500H2.500V11Q2.500 13.500 7.500 13.500V15H-7.500V13.500Q-2.500 13.500 -2.500 11V-12.500H-6Q-10.500 -12.500 -10.500 -8H-12.500Z" fill="#3a414a" stroke="none" /></Thumb>
          <Thumb><rect x="-15" y="-15" width="30" height="30" strokeWidth="2.800" /></Thumb>
          <Thumb><ellipse cx="1" cy="15.500" rx="12" ry="1.500" fill="#d4d5d8" stroke="none" /><rect x="-15" y="-15" width="30" height="30" fill="#ffe9a3" stroke="none" rx="0.500" /></Thumb>
          <Thumb><rect x="-17.500" y="-17.500" width="35" height="35" fill="#99d5ca" stroke="none" /><path d="M-3 -13.500H7L3 -2.500H9.500L-4 14L0 2H-9.500Z" fill="#009482" stroke="none" /></Thumb>
          <Thumb><path d="M-13 13L4 -4" stroke="#3a414a" strokeWidth="3.200" /><path d="M14.500 -14.500L-0.500 -9L9 0.500Z" fill="#3a414a" stroke="none" /></Thumb>
          <Thumb><rect x="-16.500" y="-16.500" width="33" height="33" rx="2.500" stroke="#282c33" /><circle cx="-8" cy="-9" r="3.300" fill="#9aa0ab" stroke="none" /><rect x="-11.300" y="-3.500" width="6.600" height="6.600" fill="#fa6c12" stroke="none" /><path d="M-8 5L-4.300 11.500H-11.700Z" fill="#9aa0ab" stroke="none" /><path d="M-2 -9H11.500M-2 -0.500H11.500M-2 8.300H11.500" stroke="#3a414a" strokeWidth="1.400" /></Thumb>
          <Thumb><rect x="-17.500" y="-17.500" width="35" height="35" fill="#dddcff" stroke="none" /><path d="M-5.500 -7.500V7.500L7.500 0Z" fill="#635dff" stroke="#635dff" strokeLinejoin="round" /></Thumb>
        </div>
      </div>
      <div className="flex flex-1 flex-col overflow-hidden pl-[23px] pt-[23px]">
        <SectionTitle closable>Flowchart</SectionTitle>
        <div className="ml-[-9px] mt-[20px] h-[0px]"><FlowchartShapes /></div>
      </div>
      <div className="flex h-[76px] shrink-0 items-center border-t border-[#dfe2e7] pl-[35px]">
        <button className="flex h-[40px] w-[198px] items-center rounded-[4px] bg-[#1071e5] pl-[28px] text-[17px] font-bold tracking-[0.330px] text-white">
          <Ico w={18} h={18} sw={1.600} className="mr-[11px]"><path d="M9 0.500V17.500M0.500 9H17.500" /></Ico>
          <span className="pt-[2px]">Shape Library</span>
        </button>
      </div>
      <div className="flex h-[56px] shrink-0 items-center border-t border-[#dfe2e7] pl-[61px] pt-px text-[20px] font-light tracking-[0.400px] text-[#282c33]">
        <Ico w={23} h={21} sw={1.300} className="mr-[13px]"><path d="M8 1H20Q22 1 22 3V18Q22 20 20 20H8M0.500 10.500H15.500M11.500 6.500L15.500 10.500L11.500 14.500" /></Ico>
        <span className="pt-[2px]">Import Data</span>
      </div>
      <div className="absolute right-[3px] top-[52px] h-[279px] w-[7px] rounded-full bg-[#9aa0b0]/50" />
    </div>
  );
}

/* ---------- diagram canvas ---------- */

const GRID_STEP = 12.68;

function gridPath(major) {
  let d = "";
  for (let i = 0; i < 89; i += 1) {
    if ((i % 5 === 0) === major) d += `M${Math.floor(468.3 + i * GRID_STEP) + 0.5} 257V980`;
  }
  for (let j = 0; j < 57; j += 1) {
    if ((j % 5 === 0) === major) d += `M467 ${Math.floor(268.3 + j * 12.69) + 0.5}H1584`;
  }
  return d;
}

const connectors = [
  "M823 345.500H1029.500Q1036.500 345.500 1036.500 352.500V462",
  "M823 481.800H1014",
  "M823 618.300H1019.600Q1026.600 618.300 1026.600 611.300V590",
  "M823 754.500H1031.500Q1038.500 754.500 1038.500 747.500V612.800H1036.500V596",
  "M1115.500 465V352.500Q1115.500 345.500 1122.500 345.500H1334",
  "M1165 529.500H1247.300Q1254.300 529.500 1254.300 522.500V488.800Q1254.300 481.800 1261.300 481.800H1334",
  "M1158.500 557.800H1243.500Q1250.500 557.800 1250.500 564.800V611.300Q1250.500 618.300 1257.500 618.300H1334",
  "M1116.600 593V747.500Q1116.600 754.500 1123.600 754.500H1334",
];

const arrowHeads = [
  "M1033 461H1039.800L1036.400 471Z",
  "M1011.500 478.400V485.200L1021.500 481.800Z",
  "M1023.200 591.500H1030L1026.600 581.500Z",
  "M1033 597.500H1039.800L1036.400 587.500Z",
  "M1332 342.100V348.900L1342 345.500Z",
  "M1332 478.400V485.200L1342 481.800Z",
  "M1332 614.900V621.700L1342 618.300Z",
  "M1332 751.100V757.900L1342 754.500Z",
];

function Node({ lines, className }) {
  return (
    <div className={`absolute rounded-[5px] border border-[#5d626d] bg-white text-center ${className}`}>
      {lines.map((line) => (
        <div key={line}>{line}</div>
      ))}
    </div>
  );
}

const boldNode = "text-[22.600px] font-bold leading-[27.300px] text-[#3a414a]";

function Canvas() {
  return (
    <div className="relative flex-1 overflow-hidden bg-[#f1f2f4] font-['Liberation_Sans',Arial,sans-serif]">
      <div className="absolute -top-[10px] left-[147px] h-[760px] w-[1117px] bg-white shadow-[0_0_5px_rgba(80,85,95,0.450)]" />
      <svg width="1600" height="723" viewBox="320 257 1600 723" fill="none" className="absolute left-0 top-0 block">
        <path d={gridPath(false)} stroke="#ececec" />
        <path d={gridPath(true)} stroke="#dcdcde" />
        <g stroke="#5a5f6b" strokeWidth="1">{connectors.map((d) => <path key={d} d={d} />)}</g>
        <ellipse cx="1082.700" cy="529.300" rx="82.500" ry="69.900" fill="#fff" stroke="#5a5f6b" />
        {arrowHeads.map((d) => <path key={d} d={d} fill="#3a414a" />)}
        <path d="M1584 973L1590 980" stroke="#b5b8bd" strokeWidth="1.500" />
      </svg>

      <Node lines={["Pharmacy", "Management"]} className="left-[287px] top-[50px] h-[77px] w-[216px] pt-[9px] text-[22px] font-bold leading-[25.700px] text-black" />
      <Node lines={["Sales", "Management"]} className={`left-[287px] top-[186px] h-[77px] w-[216px] pt-[8px] ${boldNode}`} />
      <Node lines={["Stocks", "Management"]} className={`left-[287px] top-[323px] h-[77px] w-[216px] pt-[7.500px] ${boldNode}`} />
      <Node lines={["Database", "Management"]} className={`left-[287px] top-[459px] h-[77px] w-[216px] pt-[8px] ${boldNode}`} />

      <Node lines={["Pharmacy", "Management", "Report"]} className="left-[1022px] top-[38px] h-[101px] w-[217px] pl-px pt-[4.500px] text-[23.300px] leading-[28.100px] text-black" />
      <Node lines={["Sales", "Management", "Report"]} className={`left-[1022px] top-[176px] h-[98px] w-[217px] pl-px pt-[4.200px] ${boldNode}`} />
      <Node lines={["Stocks", "Management", "Report"]} className={`left-[1022px] top-[312px] h-[98px] w-[217px] pl-px pt-[4.200px] ${boldNode}`} />
      <Node lines={["Database", "Management", "Report"]} className="left-[1022px] top-[451px] h-[93px] w-[217px] pl-px pt-[5px] text-[21.200px] font-bold leading-[25.700px] text-[#3a414a]" />

      <Node lines={["First Level Data Flow Diagram"]} className="left-[337px] top-[583px] h-[77px] w-[813px] pt-[18px] text-[26.850px] font-bold leading-[32px] text-[#3a414a]" />
      <div className="absolute left-[680px] top-[248px] w-[166px] text-center text-[32.400px] font-bold leading-[40px] text-[#3a414a]">CareFirst</div>

      <div className="absolute bottom-[2px] left-[532px] h-[9px] w-[592px] rounded-full bg-[#9aa0ab]/50" />
      <div className="absolute right-[1px] top-[256px] h-[225px] w-[9px] rounded-full bg-[#9aa0ab]/50" />
    </div>
  );
}

/* ---------- status bar ---------- */

function StatusBar() {
  return (
    <div className="flex h-[40px] items-center border-t border-[#dfe2e7] bg-[#fafbfe] pt-px text-[17px] text-[#282c33]">
      <Cell className="ml-[16px] w-[24px]"><Ico w={24} h={23} sw={1.300}><path d="M7 2H23M7 8.500H23M7 14.800H23M7 21H23" /><path d="M2.200 2V2.100M2.200 8.500V8.600M2.200 14.800V14.900M2.200 21V21.100" strokeWidth="3.800" /></Ico></Cell>
      <Cell className="ml-[21px] w-[24px]"><Ico w={24} h={23} sw={1.400}><rect x="1" y="1" width="9" height="8.700" rx="2" /><rect x="14" y="1" width="9" height="8.700" rx="2" /><rect x="1" y="13.300" width="9" height="8.700" rx="2" /><rect x="14" y="13.300" width="9" height="8.700" rx="2" /></Ico></Cell>
      <div className="mb-[4px] ml-[21px] flex h-[35px] w-[136px] items-center rounded-b-[4px] bg-[#6e7480] pl-[10px] font-light text-white">
        <span className="w-[106px] pt-[2px] tracking-[0.460px]">Flowchart</span>
        <svg width="9" height="8" viewBox="0 0 9 8" className="mb-[3px] block"><path d="M0 0H9L4.500 8Z" fill="#fff" /></svg>
      </div>
      <Ico w={24} h={24} sw={1.300} className="ml-[16px]"><circle cx="12" cy="12" r="10.800" /><path d="M12 6.500V17.500M6.500 12H17.500" /></Ico>
      <div className="ml-auto flex h-full items-center">
        <Divider />
        <Ico w={24} h={24} sw={1.500} className="ml-[13px]"><path d="M2.500 2.500H20.500V8M2.500 2.500V20.500H9" /><circle cx="2.500" cy="2.500" r="1.400" fill="#fafbfe" /><circle cx="20.500" cy="2.500" r="1.400" fill="#fafbfe" /><circle cx="2.500" cy="20.500" r="1.400" fill="#fafbfe" /><path d="M9 9L13 22L15.500 18L20 22.500L22 20.500L17.500 16.500L21.500 14.500Z" /></Ico>
        <span className="ml-[7px] w-[150px] pt-px font-semibold tracking-[0.430px]">Selected objects</span>
        <span className="flex h-[20px] w-[25px] items-center justify-center rounded-full bg-[#f0f1f4] text-[16px] font-light text-[#5b616b]">0</span>
        <Divider className="ml-[9px] h-full" />
        <Cell className="w-[51px]"><Ico w={24} h={23} sw={1.400}><path d="M12 1L22.500 6.500L12 12L1.500 6.500ZM3.500 10L1.500 11.500L12 17L22.500 11.500L20.500 10M3.500 15L1.500 16.500L12 22L22.500 16.500L20.500 15" /></Ico></Cell>
        <Divider />
        <Cell className="w-[52px]"><Ico w={24} h={24} sw={1.400}><circle cx="12" cy="12" r="10.800" /><path d="M12 4.500L17 17L12 14.500L7 17Z" /></Ico></Cell>
        <Divider />
        <Ico w={18} h={18} sw={1.800} className="ml-[15px]"><path d="M0 9H18" strokeLinecap="butt" /></Ico>
        <span className="ml-[28px] w-[57px] pt-[2px] font-light">51%</span>
        <Caret />
        <Ico w={18} h={18} sw={1.800} className="ml-[27px]"><path d="M0 9H18M9 0V18" strokeLinecap="butt" /></Ico>
        <Divider className="ml-[17px] h-full" />
        <Ico w={24} h={24} sw={1.400} className="ml-[12px] mr-[13px]"><path d="M1.500 8V1.500H8M1.500 1.500L9 9M16 1.500H22.500V8M22.500 1.500L15 9M1.500 16V22.500H8M1.500 22.500L9 15M16 22.500H22.500V16M22.500 22.500L15 15" /></Ico>
      </div>
    </div>
  );
}

/* ---------- desktop taskbar ---------- */

function StoreIcon() {
  return (
    <svg width="29" height="30" viewBox="0 0 29 30" className="block">
      <path d="M8 6V2Q8 1 9 1H20Q21 1 21 2V6" stroke="#29b1f5" strokeWidth="1.800" fill="none" />
      <path d="M0 4.500H29V26Q29 29.500 25.500 29.500H3.500Q0 29.500 0 26Z" fill="#f3f3f3" />
      <path d="M9 11.500H14V16.500H9Z" fill="#f25022" /><path d="M15 11.500H20V16.500H15Z" fill="#7fba00" /><path d="M9 17.500H14V22.500H9Z" fill="#00a4ef" /><path d="M15 17.500H20V22.500H15Z" fill="#ffb900" />
    </svg>
  );
}

function DeviceIcon() {
  return (
    <svg width="30" height="30" viewBox="0 0 30 30" className="block">
      <path d="M2 2H28V21H2Z" fill="#0e6cb8" /><path d="M0 21H30V22.500H0Z" fill="#1b86d6" /><path d="M6 5H19V28H6Z" fill="#35c3f3" /><path d="M6 15H19V21H6Z" fill="#1b9de2" /><path d="M6 21H19V28H6Z" fill="#0b63b0" /><path d="M9 6.500H16" stroke="#0a5c9c" />
    </svg>
  );
}

function EdgeIcon() {
  return (
    <svg width="30" height="30" viewBox="0 0 30 30" className="block">
      <defs>
        <linearGradient id="edgeTop" x1="0" x2="1"><stop offset="0" stopColor="#1fa7e6" /><stop offset="0.600" stopColor="#34c6b8" /><stop offset="1" stopColor="#6ce04a" /></linearGradient>
        <linearGradient id="edgeSide" x1="0" y1="0" x2="1" y2="1"><stop offset="0" stopColor="#1d9fe8" /><stop offset="1" stopColor="#0b62c4" /></linearGradient>
      </defs>
      <path d="M0 14A15 15 0 0 1 30 12.500Q30 18.500 24 19Q18.500 19 19 17Q20.500 14 18 11.500Q10 6 0 14Z" fill="url(#edgeTop)" />
      <path d="M0 14Q3 8 10 9Q17 10 18 13Q10 12 11 19Q13 27 22 27.500Q8 33 2 23Q0 19 0 14Z" fill="url(#edgeSide)" />
      <path d="M11.500 17Q12 24 20 24Q25 24 28 21.500Q26 27 20 29Q11 29 9 22Q8.500 17 12.500 13Q11.500 15 11.500 17Z" fill="#0f4fa0" />
    </svg>
  );
}

function MailIcon() {
  return (
    <div className="relative">
      <svg width="30" height="30" viewBox="0 0 30 30" className="block">
        <path d="M0 10L14 1L30 10V14H0Z" fill="#0a4f9e" /><path d="M3 11H27L15 20Z" fill="#e4e9ee" /><path d="M0 10.500L30 29H0Z" fill="#1f9bea" /><path d="M30 10.500V29H0Z" fill="#36b8f4" /><path d="M0 10.500L9 16.500L0 29Z" fill="#1587d8" /><path d="M0 10.500L15 20L6 25Z" fill="#249fe8" />
      </svg>
      <div className="absolute left-[16px] top-[-6px] flex size-[20px] items-center justify-center rounded-full bg-[#f47b62] text-[14px] leading-none text-[#1f1f2a]">4</div>
    </div>
  );
}

function CodeIcon() {
  return (
    <svg width="30" height="30" viewBox="0 0 30 30" className="block">
      <path d="M22 0L30 3.500V26.500L22 30L20 27V3Z" fill="#2aa3ee" /><path d="M22 0V9L4 22.500L0.500 20.500V18.500Z" fill="#0b6fb8" /><path d="M22 30V21L4 7.500L0.500 9.500V11.500Z" fill="#1389d6" />
    </svg>
  );
}

function EclipseIcon() {
  return (
    <svg width="30" height="28" viewBox="0 0 30 28" className="block">
      <circle cx="14" cy="14" r="14" fill="#f7941e" />
      <circle cx="16.800" cy="14" r="13.600" fill="#1f1f2a" />
      <circle cx="17" cy="14" r="12.800" fill="#34286b" />
      <path d="M4.200 10.500H29.800M4 14H30M4.200 17.500H29.800" stroke="#e6e2f0" strokeWidth="1.800" />
    </svg>
  );
}

function ChromeIcon() {
  return (
    <svg width="30" height="30" viewBox="0 0 30 30" className="block">
      <path d="M15 15L2 7.500A15 15 0 0 1 28 7.500H15Z" fill="#e33b2e" /><path d="M15 15H8.500L2 7.500A15 15 0 0 0 15 30L21.500 18.700Z" fill="#2c9f4a" /><path d="M28 7.500A15 15 0 0 1 15 30L21.500 18.500V7.500Z" fill="#fcc31e" /><circle cx="15" cy="15" r="7.300" fill="#fff" /><circle cx="15" cy="15" r="5.800" fill="#3578e8" />
    </svg>
  );
}

function FolderIcon() {
  return (
    <svg width="30" height="27" viewBox="0 0 30 27" className="block">
      <path d="M0 1.500Q0 0 1.500 0H10L13 3V6H0Z" fill="#e0a30e" /><path d="M0 5.500H11L13 3H28.500Q30 3 30 4.500V25Q30 26.500 28.500 26.500H1.500Q0 26.500 0 25Z" fill="#fdcb45" /><path d="M5 26.500V21Q5 19 7 19H23Q25 19 25 21V26.500Z" fill="#1583d0" /><path d="M9 22.500H21" stroke="#0a5a9b" />
    </svg>
  );
}

function WordIcon() {
  return (
    <div className="relative flex h-[27px] w-[27px] items-center">
      <div className="absolute right-0 top-[3px] flex h-[21px] w-[12px] flex-col justify-center gap-[2px] border border-[#2b579a] bg-white px-[1px]">
        <div className="h-px bg-[#2b579a]" /><div className="h-px bg-[#2b579a]" /><div className="h-px bg-[#2b579a]" /><div className="h-px bg-[#2b579a]" /><div className="h-px bg-[#2b579a]" />
      </div>
      <div className="relative flex h-[26px] w-[16px] items-center justify-center bg-[#2b579a] text-[13px] font-bold text-white">W</div>
    </div>
  );
}

function Task({ children, running }) {
  return (
    <div className="relative flex h-[50px] w-[55px] shrink-0 items-center justify-center">
      {children}
      {running && <div className="absolute bottom-[1px] h-[4px] w-[8px] rounded-full bg-[#9a9aa0]" />}
    </div>
  );
}

function Taskbar() {
  return (
    <div className="flex h-[60px] items-center border-t border-[#3a3a40] bg-[#1f1f2a] pb-px text-[#f5f5f7]">
      <div className="ml-[522px] grid size-[29px] grid-cols-2 gap-[1px]">
        <div className="bg-[#79d6fb]" /><div className="bg-[#4cc6fb]" /><div className="bg-[#41bdfa]" /><div className="bg-[#1c9dfa]" />
      </div>
      <div className="ml-[17px] flex h-[40px] w-[125px] items-center rounded-full border-t border-[#3a3a47] bg-[#2c2c38] pl-[29px] text-[14px]">
        <Ico w={18} h={18} sw={2} className="mr-[6px]"><circle cx="7.500" cy="7.500" r="6.300" /><path d="M12 12L16.500 16.500" /></Ico>
        <span className="pb-px">Search</span>
      </div>
      <div className="ml-[4px] flex items-center">
        <Task><StoreIcon /></Task>
        <Task><DeviceIcon /></Task>
        <Task><EdgeIcon /></Task>
        <Task><MailIcon /></Task>
        <Task><CodeIcon /></Task>
        <Task><EclipseIcon /></Task>
        <Task>
          <div className="flex size-[30px] items-center bg-white text-[8.500px] font-bold tracking-[-0.300px] text-[#1c4980]">
            <span className="flex size-[11px] shrink-0 items-center justify-center rounded-full bg-[#1c4980] text-white">un</span>stop
          </div>
        </Task>
        <Task>
          <div className="flex size-[26px] items-center justify-center rounded-full bg-white"><SiTelegram className="size-[27px] shrink-0 text-[#229bd5]" /></div>
        </Task>
        <Task><ChromeIcon /></Task>
        <Task>
          <div className="relative flex size-[50px] items-center justify-center rounded-[5px] border border-[#3b3d42] bg-[#2d2f35]">
            <BraveShield w={26} h={30} />
            <div className="absolute bottom-0 h-[4px] w-[20px] rounded-full bg-[#f47b62]" />
          </div>
        </Task>
        <Task running><WhatsAppIcon size={28} /></Task>
        <Task running><FolderIcon /></Task>
        <Task running><WordIcon /></Task>
      </div>
      <div className="ml-auto flex items-center text-[14px] leading-[20px]">
        <Ico w={16} h={10} sw={1.300}><path d="M1 9L8 1.500L15 9" /></Ico>
        <div className="ml-[20px] w-[30px] pb-px text-center">ENG<br />IN</div>
        <Ico w={21} h={17} sw={1.700} className="ml-[22px]"><path d="M1 6Q10.500 -3 20 6M4 9.200Q10.500 3 17 9.200M7 12.300Q10.500 9 14 12.300" /><circle cx="10.500" cy="15" r="1.200" fill="currentColor" stroke="none" /></Ico>
        <Ico w={21} h={18} sw={1.300} className="ml-[9px]"><path d="M1 6.500H4.500L9 2V16L4.500 11.500H1ZM12 6Q14 9 12 12M14.500 3.500Q18 9 14.500 14.500M17 1.200Q22.500 9 17 16.800" /></Ico>
        <Ico w={21} h={13} sw={1.400} className="ml-[9px]"><rect x="1" y="1" width="16" height="11" rx="2.500" /><path d="M3.500 3.500H9V9.500H3.500Z" fill="currentColor" stroke="none" /><path d="M19 5V8" strokeWidth="2" /></Ico>
        <div className="ml-[20px] w-[74px] whitespace-nowrap pb-px text-right text-[14px] tracking-[-0.050px]">01:37<br />29-11-2022</div>
        <div className="ml-[8px] mr-[24px] flex size-[22px] items-center justify-center rounded-full bg-[#f47b62] text-[12px] text-[#1f1f2a]">21</div>
      </div>
    </div>
  );
}

export default function App() {
  return (
    <div className="flex h-[1080px] w-[1920px] flex-col overflow-hidden bg-[#fafbfe] font-['Open_Sans','Noto_Sans',sans-serif]">
      <TabStrip />
      <AddressBar />
      <BookmarksBar />
      <div className="flex min-h-0 flex-1 flex-col font-[Inter,'Open_Sans',sans-serif]">
        <AppHeader />
        <Toolbar />
        <div className="flex min-h-0 flex-1">
          <Rail />
          <ShapesPanel />
          <Canvas />
        </div>
        <StatusBar />
      </div>
      <Taskbar />
    </div>
  );
}
